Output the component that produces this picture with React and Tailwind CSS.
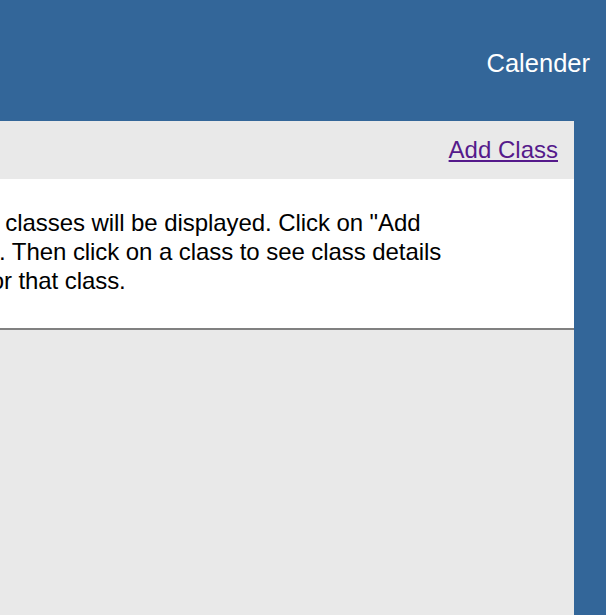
const App = () => {
    return (
        <div className="min-h-screen bg-[#336699] font-['Liberation_Sans',Arial,sans-serif] flex flex-col overflow-hidden">
            {/* Top bar */}
            <header className="h-[121px] flex justify-end pr-4 pt-[49px]">
                <span className="text-white text-[25.5px] leading-[28px]">Calender</span>
            </header>

            {/* Content panel */}
            <main className="flex-1 flex pr-8">
                <div className="flex-1 -ml-[100px] bg-[#e9e9e9] flex flex-col">
                    <div className="h-[58px] flex items-center justify-end pr-4">
                        <a href="#" className="text-[#551a8b] underline text-[24px] leading-[28px]">
                            Add Class
                        </a>
                    </div>

                    <div className="h-[151px] bg-white border-b-2 border-[#808080] pt-[29px] pl-[31px]">
                        <p className="text-black text-[24px] leading-[29px] whitespace-nowrap tracking-[-0.07px]">
                            Saved classes will be displayed. Click on "Add
                            <br />
                            Class". Then click on a class to see class details
                            <br />
                            data for that class.
                        </p>
                    </div>
                </div>
            </main>
        </div>
    );
};

export default App;
